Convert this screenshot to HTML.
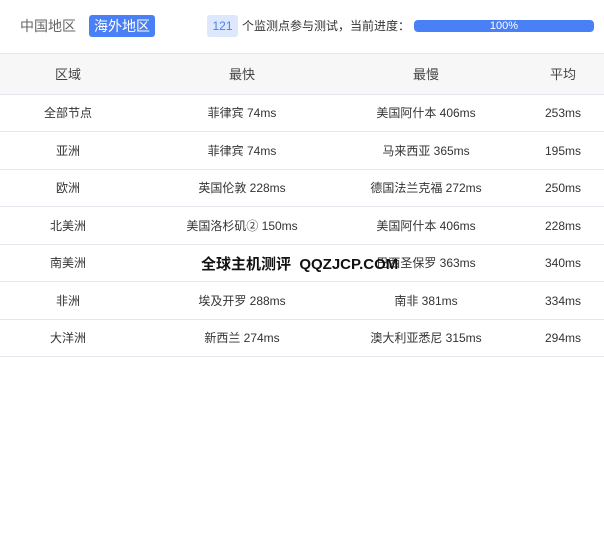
<!DOCTYPE html>
<html><head><meta charset="utf-8"><style>
body{margin:0;width:604px;height:543px;background:#fff;font-family:"Liberation Sans","Noto Sans CJK SC",sans-serif;color:#333;position:relative;overflow:hidden}
.a{position:absolute;white-space:nowrap}
.hdr{position:absolute;left:0;top:53px;width:604px;height:40px;background:#f7f7f7;border-top:1px solid #e4e7ed;border-bottom:1px solid #e4e7ed}
.row{position:absolute;left:0;width:604px;height:37px;border-bottom:1px solid #e4e7ed;font-size:12px}
.c{position:absolute;top:1px;line-height:37px;transform:translateX(-50%);white-space:nowrap}
.hdr .c{line-height:40px;font-size:13px;color:#444}
</style></head><body>
<div class="a" style="left:20px;top:17px;font-size:14px;color:#666;line-height:18px">中国地区</div>
<div class="a" style="left:89px;top:15px;width:66px;height:22px;background:#4a80f5;border-radius:3px;color:#fff;font-size:14px;line-height:22px;text-align:center">海外地区</div>
<div class="a" style="left:207px;top:15px;width:31px;height:22px;background:#dde8fd;border-radius:3px;color:#4a80f5;font-size:12px;line-height:22px;text-align:center">121</div>
<div class="a" style="left:242px;top:17px;font-size:12px;color:#333;line-height:18px">个监测点参与测试，当前进度：</div>
<div class="a" style="left:414px;top:20px;width:180px;height:12px;background:#4a80f5;border-radius:4px;color:#fff;font-size:11px;line-height:12px;text-align:center">100%</div>
<div class="hdr"><span class="c" style="left:68px">区域</span><span class="c" style="left:242px">最快</span><span class="c" style="left:426px">最慢</span><span class="c" style="left:563px">平均</span></div>
<div class="row" style="top:94px"><span class="c" style="left:68px">全部节点</span><span class="c" style="left:242px">菲律宾 74ms</span><span class="c" style="left:426px">美国阿什本 406ms</span><span class="c" style="left:563px">253ms</span></div>
<div class="row" style="top:132px"><span class="c" style="left:68px">亚洲</span><span class="c" style="left:242px">菲律宾 74ms</span><span class="c" style="left:426px">马来西亚 365ms</span><span class="c" style="left:563px">195ms</span></div>
<div class="row" style="top:169px"><span class="c" style="left:68px">欧洲</span><span class="c" style="left:242px">英国伦敦 228ms</span><span class="c" style="left:426px">德国法兰克福 272ms</span><span class="c" style="left:563px">250ms</span></div>
<div class="row" style="top:207px"><span class="c" style="left:68px">北美洲</span><span class="c" style="left:242px">美国洛杉矶② 150ms</span><span class="c" style="left:426px">美国阿什本 406ms</span><span class="c" style="left:563px">228ms</span></div>
<div class="row" style="top:244px"><span class="c" style="left:68px">南美洲</span><span class="c" style="left:426px">巴西圣保罗 363ms</span><span class="c" style="left:563px">340ms</span></div>
<div class="row" style="top:282px"><span class="c" style="left:68px">非洲</span><span class="c" style="left:242px">埃及开罗 288ms</span><span class="c" style="left:426px">南非 381ms</span><span class="c" style="left:563px">334ms</span></div>
<div class="row" style="top:319px"><span class="c" style="left:68px">大洋洲</span><span class="c" style="left:242px">新西兰 274ms</span><span class="c" style="left:426px">澳大利亚悉尼 315ms</span><span class="c" style="left:563px">294ms</span></div>
<div class="a" style="left:201px;top:256px;font-size:15px;font-weight:bold;color:#111;line-height:18px">全球主机测评&nbsp; QQZJCP.COM</div>
</body></html>
